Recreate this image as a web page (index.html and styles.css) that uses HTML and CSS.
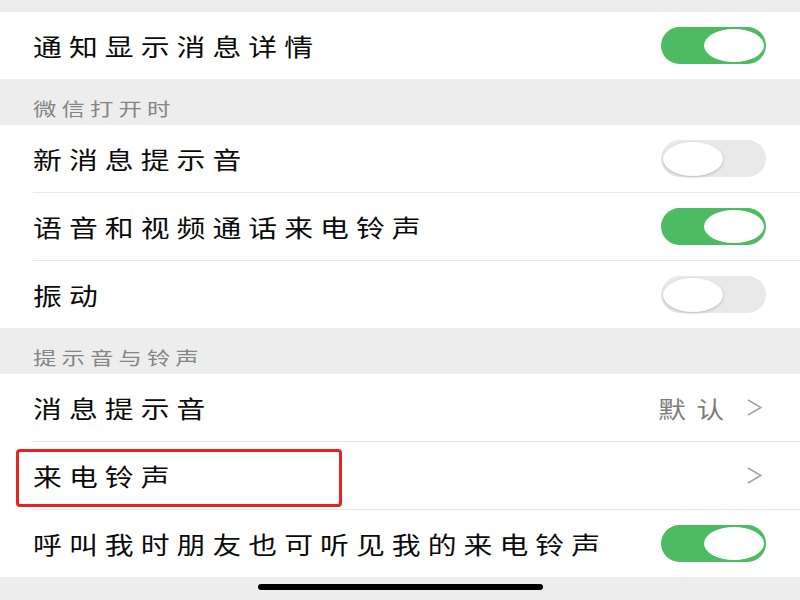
FILE: index.html
```html
<!DOCTYPE html>
<html lang="zh-CN">
<head>
    <meta charset="UTF-8">
    <meta name="viewport" content="width=device-width, initial-scale=1.0">
    <title>新消息通知</title>
    <link rel="stylesheet" href="styles.css">
</head>
<body>
    <div class="page">
        <div class="spacer-top"></div>

        <div class="group">
            <div class="row">
                <div class="row-inner">
                    <span class="label">通知显示消息详情</span>
                    <span class="switch on"><span class="knob"></span></span>
                </div>
            </div>
        </div>

        <div class="section-title"><span>微信打开时</span></div>
        <div class="group">
            <div class="row">
                <div class="row-inner">
                    <span class="label">新消息提示音</span>
                    <span class="switch"><span class="knob"></span></span>
                </div>
            </div>
            <div class="row">
                <div class="row-inner">
                    <span class="label">语音和视频通话来电铃声</span>
                    <span class="switch on"><span class="knob"></span></span>
                </div>
            </div>
            <div class="row">
                <div class="row-inner">
                    <span class="label">振动</span>
                    <span class="switch"><span class="knob"></span></span>
                </div>
            </div>
        </div>

        <div class="section-title"><span>提示音与铃声</span></div>
        <div class="group">
            <div class="row">
                <div class="row-inner">
                    <span class="label">消息提示音</span>
                    <span class="value">默认</span>
                    <svg class="chevron" viewBox="0 0 15 17" width="15" height="17">
                        <polyline points="1,1 14,8.5 1,16" fill="none" stroke="#a3a3a3" stroke-width="1.6"/>
                    </svg>
                </div>
            </div>
            <div class="row">
                <div class="row-inner">
                    <span class="label">来电铃声</span>
                    <svg class="chevron" viewBox="0 0 15 17" width="15" height="17">
                        <polyline points="1,1 14,8.5 1,16" fill="none" stroke="#a3a3a3" stroke-width="1.6"/>
                    </svg>
                </div>
                <span class="mark"></span>
            </div>
            <div class="row">
                <div class="row-inner">
                    <span class="label">呼叫我时朋友也可听见我的来电铃声</span>
                    <span class="switch on"><span class="knob"></span></span>
                </div>
            </div>
        </div>

        <div class="bottom">
            <div class="home-bar"></div>
        </div>
    </div>
</body>
</html>
```

FILE: styles.css
```css
body {
    margin: 0;
    background-color: #ededed;
    font-family: "Noto Sans CJK SC", "Noto Sans", sans-serif;
    color: #0a0a0a;
}
.page {
    width: 800px;
    height: 600px;
    overflow: hidden;
}
.spacer-top {
    height: 12px;
}
.group {
    background-color: #fff;
}
.row {
    position: relative;
    padding-left: 33px;
}
.row-inner {
    display: flex;
    align-items: center;
    height: 67px;
    padding-right: 34px;
}
.row + .row .row-inner {
    border-top: 1px solid #e6e6e6;
}
/* the screenshot is stretched sideways, so the text is too */
.label {
    flex: 1;
    font-size: 24px;
    letter-spacing: 5.9px;
    line-height: 30px;
    transform: scaleX(1.2);
    transform-origin: left center;
    white-space: nowrap;
}
.value {
    font-size: 23px;
    letter-spacing: 9px;
    color: #7d7d7d;
    margin-right: 12px;
    transform: scaleX(1.2);
    transform-origin: right center;
}
.chevron {
    display: block;
    margin-right: 4px;
}
.section-title {
    height: 46px;
    box-sizing: border-box;
    display: flex;
    align-items: flex-end;
    padding: 0 0 6px 33px;
    font-size: 18px;
    line-height: 22px;
    letter-spacing: 3.9px;
    color: #858585;
}
.section-title span {
    transform: scaleX(1.3);
    transform-origin: left center;
}

/* switches */
.switch {
    display: flex;
    align-items: center;
    width: 105px;
    height: 37px;
    border-radius: 19px;
    background-color: #e9e9e9;
    padding: 0 2px;
    box-sizing: border-box;
}
.switch .knob {
    width: 60px;
    height: 34px;
    border-radius: 50%;
    background-color: #fff;
    box-shadow: 0 1px 3px rgba(0, 0, 0, 0.22);
}
.switch.on {
    background-color: #4cbb62;
    justify-content: flex-end;
}
.switch.on .knob {
    box-shadow: none;
    height: 33px;
}

/* red annotation box */
.mark {
    position: absolute;
    left: 16px;
    top: 8px;
    width: 326px;
    height: 58px;
    box-sizing: border-box;
    border: 3px solid #e8231f;
    border-radius: 4px;
}

.bottom {
    height: 25px;
    padding-top: 7px;
    box-sizing: border-box;
}
.home-bar {
    width: 285px;
    height: 6px;
    margin: 0 auto;
    border-radius: 3px;
    background-color: #000;
}
```
